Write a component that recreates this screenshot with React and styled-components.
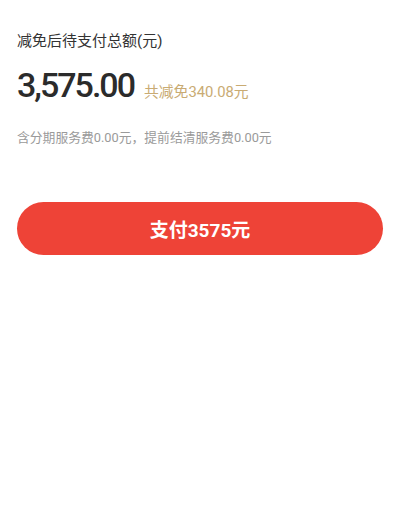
import React from "react";
import styled, { createGlobalStyle } from "styled-components";

const Global = createGlobalStyle`
  html, body { margin: 0; padding: 0; background: #fff; }
  body { font-family: Roboto, "Noto Sans CJK SC", sans-serif; }
`;

const Page = styled.div`
  width: 400px;
  height: 514px;
  box-sizing: border-box;
  padding: 31px 17px 0 17px;
  display: flex;
  flex-direction: column;
`;

const Title = styled.div`
  font-size: 15px;
  line-height: 20px;
  color: #333;
`;

const AmountRow = styled.div`
  display: flex;
  align-items: baseline;
  margin-top: 12px;
  gap: 10px;
`;

const Amount = styled.div`
  font-family: Roboto, sans-serif;
  font-size: 34px;
  font-weight: 500;
  line-height: 44px;
  color: #2b2b2b;
  letter-spacing: -2px;
`;

const Saved = styled.div`
  font-size: 14.8px;
  color: #c9ab73;
`;

const Note = styled.div`
  margin-top: 22px;
  font-size: 12.8px;
  line-height: 18px;
  color: #9a9a9a;
`;

const PayButton = styled.button`
  margin-top: 55px;
  height: 53px;
  width: 100%;
  border: none;
  border-radius: 27px;
  background: #ee4337;
  color: #fff;
  font-family: Roboto, "Noto Sans CJK SC", sans-serif;
  font-size: 19px;
  font-weight: 700;
  display: flex;
  align-items: center;
  justify-content: center;
  padding: 0;
`;

export default function App() {
  return (
    <>
      <Global />
      <Page>
        <Title>减免后待支付总额(元)</Title>
        <AmountRow>
          <Amount>3,575.00</Amount>
          <Saved>共减免340.08元</Saved>
        </AmountRow>
        <Note>含分期服务费0.00元，提前结清服务费0.00元</Note>
        <PayButton>支付3575元</PayButton>
      </Page>
    </>
  );
}
